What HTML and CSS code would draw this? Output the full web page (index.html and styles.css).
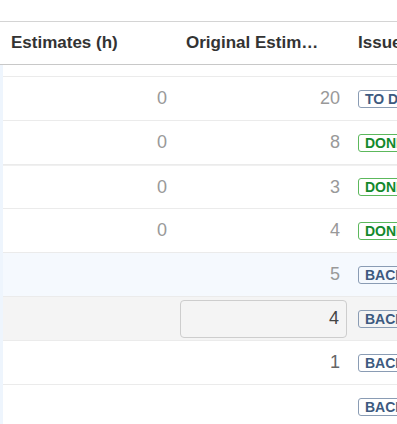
FILE: index.html
```html
<!DOCTYPE html>
<html lang="en">
<head>
    <meta charset="UTF-8">
    <meta name="viewport" content="width=device-width, initial-scale=1.0">
    <title>Estimates</title>
    <link rel="stylesheet" href="styles.css">
</head>
<body>
<div class="grid">
    <div class="head">
        <div class="hcell">Estimates (h)</div>
        <div class="hcell">Original Estimates (h)</div>
        <div class="hcell">Issue Status</div>
    </div>

    <div class="body">
        <div class="row first">
            <div class="cell num"></div>
            <div class="cell num"></div>
            <div class="cell"><span class="badge todo">Backlog</span></div>
        </div>
        <div class="row">
            <div class="cell num">0</div>
            <div class="cell num">20</div>
            <div class="cell"><span class="badge todo">To Do</span></div>
        </div>
        <div class="row">
            <div class="cell num">0</div>
            <div class="cell num">8</div>
            <div class="cell"><span class="badge done">Done</span></div>
        </div>
        <div class="row thick">
            <div class="cell num">0</div>
            <div class="cell num">3</div>
            <div class="cell"><span class="badge done">Done</span></div>
        </div>
        <div class="row">
            <div class="cell num">0</div>
            <div class="cell num">4</div>
            <div class="cell"><span class="badge done">Done</span></div>
        </div>
        <div class="row hover">
            <div class="cell num"></div>
            <div class="cell num">5</div>
            <div class="cell"><span class="badge todo">Backlog</span></div>
        </div>
        <div class="row editing">
            <div class="cell num"></div>
            <div class="cell edit"><input class="editor" type="text" value="4"></div>
            <div class="cell"><span class="badge todo">Backlog</span></div>
        </div>
        <div class="row">
            <div class="cell num"></div>
            <div class="cell num dark">1</div>
            <div class="cell"><span class="badge todo">Backlog</span></div>
        </div>
        <div class="row">
            <div class="cell num"></div>
            <div class="cell num"></div>
            <div class="cell"><span class="badge todo">Backlog</span></div>
        </div>
    </div>
</div>
</body>
</html>
```

FILE: styles.css
```css
body {
    margin: 0;
    padding: 0;
    font-family: "Liberation Sans", Arial, sans-serif;
    background: #fff;
    color: #333;
}

.grid {
    padding-top: 21px;
    width: 100%;
    height: 424px;
    overflow: hidden;
    box-sizing: border-box;
}

.head {
    display: grid;
    grid-template-columns: 177px 173px 1fr;
    height: 42px;
    border-top: 1px solid #d4d4d4;
    border-bottom: 1px solid #c8c8c8;
    box-sizing: content-box;
}

.hcell {
    display: flex;
    align-items: center;
    padding: 0 24px 0 11px;
    font-size: 17px;
    font-weight: bold;
    color: #333;
    white-space: nowrap;
    overflow: hidden;
}

.hcell:nth-child(2) {
    padding-left: 9px;
    display: block;
    line-height: 42px;
    text-overflow: ellipsis;
}

.hcell:nth-child(3) {
    padding-left: 8px;
}

.body {
    border-left: 3px solid #eef5fd;
    height: 360px;
    overflow: hidden;
}

.row {
    display: grid;
    grid-template-columns: 174px 173px 1fr;
    height: 43px;
    border-bottom: 1px solid #ebebeb;
}

/* row scrolled mostly out of view */
.row.first {
    margin-top: -32px;
}

.row.first .cell {
    align-items: flex-end;
    padding-bottom: 11px;
}

.row.thick {
    border-top: 1px solid #f0f0f0;
    height: 42px;
}

.row.hover {
    background: #f5f9fe;
}

.row.editing {
    background: #f4f4f4;
}

.cell {
    display: flex;
    align-items: center;
    padding: 0 10px 0 8px;
    font-size: 18px;
    color: #999;
    white-space: nowrap;
    overflow: hidden;
}

.cell.num {
    justify-content: flex-end;
}

.cell.dark {
    color: #666;
}

.cell.edit {
    padding: 0 3px;
}

.editor {
    width: 100%;
    height: 38px;
    box-sizing: border-box;
    border: 1px solid #cdcdcd;
    border-radius: 4px;
    background: #f4f4f4;
    font-family: "Liberation Sans", Arial, sans-serif;
    font-size: 18px;
    color: #444;
    text-align: right;
    padding: 0 7px;
    outline: none;
}

.badge {
    display: inline-block;
    text-transform: uppercase;
    font-size: 14px;
    font-weight: bold;
    line-height: 16px;
    padding: 0 6px;
    border-radius: 3px;
    border: 1px solid #8a9cb4;
    color: #3d5a80;
}

.badge.done {
    border-color: #5cb85c;
    color: #14892c;
}
```
